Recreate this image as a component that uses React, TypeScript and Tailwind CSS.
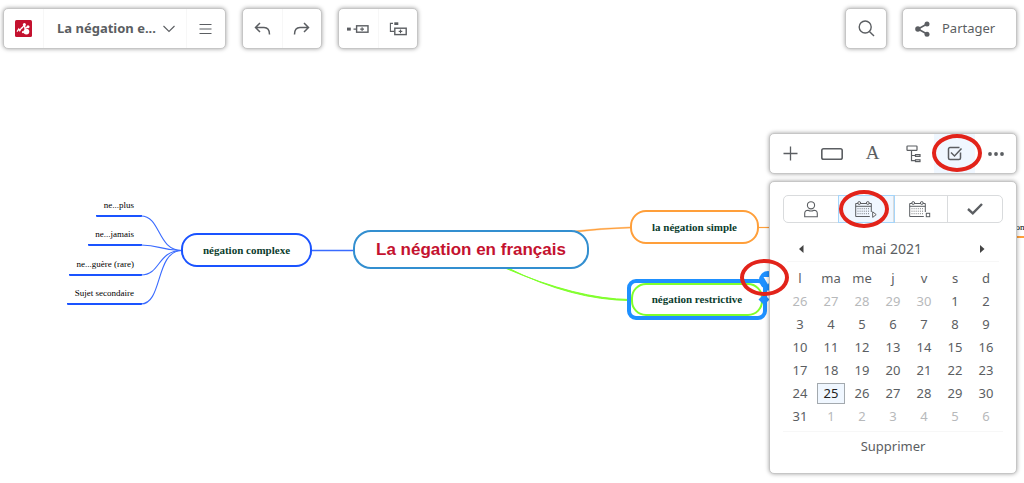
import React from 'react'

const BOX = 'rounded-[5px] border border-[#c6c6c6] bg-white shadow-[0_0_4px_rgba(0,0,0,0.36)]'
const INK = '#5b5e62'

function Logo() {
  return (
    <svg width="17" height="17" viewBox="0 0 17 17" aria-hidden="true">
      <rect width="17" height="17" rx="1.5" fill="#c4122f" />
      <g fill="#fff" stroke="#fff">
        <circle cx="9.4" cy="4.4" r="1.5" stroke="none" />
        <circle cx="13" cy="6.8" r="1.5" stroke="none" />
        <circle cx="11.4" cy="11.6" r="2.9" stroke="none" />
        <circle cx="8" cy="12.2" r="1.1" stroke="none" />
        <path d="M2 11.6 L3.8 9 L4.8 10.8 L6.6 7.6" fill="none" strokeWidth="1.2" />
        <path d="M6.4 8.6 L9.4 5 L10 8.4 L12.6 7.2" fill="none" strokeWidth="1.4" />
      </g>
    </svg>
  )
}

function TopBar() {
  return (
    <header className="relative z-10 flex items-start justify-between pt-2 pr-[7px] pl-[3px]">
      <div className="flex gap-4">
        <div className={`flex h-[41px] divide-x divide-[#f7f7f7] ${BOX}`}>
          <button aria-label="Accueil" className="flex w-10 items-center justify-center">
            <Logo />
          </button>
          <button className="flex w-[143px] items-center justify-center gap-[7px] pl-0.5 text-[13px] font-bold">
            <span>La négation e...</span>
            <svg width="12" height="8" viewBox="0 0 12 8" fill="none" stroke={INK} strokeWidth="1.1" aria-hidden="true">
              <path d="M0.5 1 L6 6.5 L11.5 1" />
            </svg>
          </button>
          <button aria-label="Menu" className="flex w-[38px] items-center justify-center pr-px">
            <svg width="13" height="12" viewBox="0 0 13 12" stroke={INK} strokeWidth="1.2" aria-hidden="true">
              <path d="M0.5 1.5H12.5M0.5 6H12.5M0.5 10.5H12.5" />
            </svg>
          </button>
        </div>
        <div className={`flex h-[41px] w-20 divide-x divide-[#f7f7f7] ${BOX}`}>
          <button aria-label="Annuler" className="flex flex-1 items-center justify-center">
            <svg width="17" height="14" viewBox="0 0 17 14" fill="none" stroke={INK} strokeWidth="1.5" aria-hidden="true">
              <path d="M6 1 L1.5 5.5 L6 10 M1.5 5.5 H10 Q15.5 5.5 15.5 12.5" />
            </svg>
          </button>
          <button aria-label="Rétablir" className="flex flex-1 items-center justify-center">
            <svg width="17" height="14" viewBox="0 0 17 14" fill="none" stroke={INK} strokeWidth="1.5" aria-hidden="true">
              <path d="M11 1 L15.5 5.5 L11 10 M15.5 5.5 H7 Q1.5 5.5 1.5 12.5" />
            </svg>
          </button>
        </div>
        <div className={`flex h-[41px] w-20 divide-x divide-[#f7f7f7] ${BOX}`}>
          <button aria-label="Ajouter un sous-thème" className="flex flex-1 items-center justify-center">
            <svg width="22" height="8" viewBox="0 0 22 8" fill="none" stroke={INK} aria-hidden="true">
              <rect x="0" y="2.6" width="3.8" height="3" fill={INK} stroke="none" />
              <path d="M6.5 4.1H10M13.2 4.1h3.8M15.1 2.3v3.6" strokeWidth="1.1" />
              <rect x="9.6" y="0.8" width="11.4" height="6.4" strokeWidth="1.4" />
            </svg>
          </button>
          <button aria-label="Ajouter un thème" className="flex flex-1 items-center justify-center">
            <svg width="18" height="14" viewBox="0 0 18 14" fill="none" stroke={INK} aria-hidden="true">
              <rect x="5.3" y="0.3" width="4" height="2.7" fill={INK} stroke="none" />
              <path d="M4 1.4H1.4V9.4H5M9.7 9.4h3.6M11.5 7.6v3.6" strokeWidth="1.1" />
              <rect x="5.8" y="6.2" width="11.4" height="6.4" strokeWidth="1.4" />
            </svg>
          </button>
        </div>
      </div>
      <div className="flex gap-[15px]">
        <button aria-label="Rechercher" className={`flex h-[41px] w-[42px] items-center justify-center ${BOX}`}>
          <svg width="17" height="17" viewBox="0 0 17 17" fill="none" stroke={INK} strokeWidth="1.4" aria-hidden="true">
            <circle cx="7.2" cy="7" r="6" />
            <path d="M11.4 11.4 L16 16" />
          </svg>
        </button>
        <button className={`flex h-[41px] w-[115px] items-center gap-3 pl-3 text-[13px] ${BOX}`}>
          <svg width="15" height="16" viewBox="0 0 15 16" stroke={INK} fill={INK} aria-hidden="true">
            <path d="M12 3 L3 8 L12 13" fill="none" strokeWidth="1.6" />
            <circle cx="12" cy="3" r="2.5" stroke="none" />
            <circle cx="2.9" cy="8" r="2.7" stroke="none" />
            <circle cx="12" cy="13.2" r="2.5" stroke="none" />
          </svg>
          <span>Partager</span>
        </button>
      </div>
    </header>
  )
}

function Leaf({ className, children }: { className: string; children: React.ReactNode }) {
  return (
    <div className={`absolute h-[18px] rounded-b-[1px] border-b-2 border-[#1a53ff] pr-2 text-right text-[9px] leading-[13px] whitespace-nowrap ${className}`}>
      {children}
    </div>
  )
}

function MindMap() {
  return (
    <main className="absolute inset-0 overflow-hidden font-['Liberation_Serif',serif] text-black">
      <svg className="absolute top-0 left-0" width="1024" height="483" viewBox="0 0 1024 483" fill="none" aria-hidden="true">
        <g stroke="#3a6bff" strokeWidth="1.1">
          <path d="M141 216C161 216 157 250.5 182 250.5" />
          <path d="M141 245C161 245 160 250.5 182 250.5" />
          <path d="M141 275C161 275 157 250.5 182 250.5" />
          <path d="M141 304C163 304 155 250.5 182 250.5" />
          <path d="M311 250.5H354" strokeWidth="1.4" />
        </g>
        <path d="M574 231 Q600 228 631 227 V228 Q600 229 577 232Z" fill="#ff9f3a" stroke="#ff9f3a" strokeWidth=".5" />
        <path d="M758 227.5H770" stroke="#ff9f3a" strokeWidth="1.2" />
        <path d="M1012 237H1024" stroke="#ff9f3a" strokeWidth="2" />
        <path d="M505 268 Q577 299 630 299.5 V300.5 Q572 300 508 268Z" fill="#80ff2b" stroke="#80ff2b" strokeWidth="1" />
      </svg>

      <Leaf className="top-[199px] left-[96px] w-[46px]">ne...plus</Leaf>
      <Leaf className="top-[228px] left-[88px] w-[54px]">ne...jamais</Leaf>
      <Leaf className="top-[258px] left-[69px] w-[73px]">ne...guère (rare)</Leaf>
      <Leaf className="top-[287px] left-[67px] w-[75px]">Sujet secondaire</Leaf>

      <div className="absolute top-[233px] left-[181px] flex h-[34px] w-[131px] items-center justify-center rounded-[16px] border-2 border-[#1a53ff] bg-white text-[11px] font-bold text-[#0b3d2e]">
        négation complexe
      </div>
      <h1 className="absolute top-[230px] left-[353px] flex h-[39px] w-[236px] items-center justify-center rounded-[18px] border-2 border-[#338fd0] bg-white font-['Liberation_Sans',sans-serif] text-[17px] font-bold text-[#c4122f]">
        La négation en français
      </h1>
      <div className="absolute top-[210px] left-[630px] flex h-[34px] w-[129px] items-center justify-center rounded-[16px] border-2 border-[#ff9f3a] bg-white text-[11px] font-bold text-[#0b3d2e]">
        la négation simple
      </div>
      <div className="absolute top-[279px] left-[627px] h-[41px] w-[140px] rounded-[9px] border-4 border-[#1e90ff] bg-white">
        <div className="flex h-full items-center justify-center rounded-[15px] border-2 border-[#80ff2b] text-[11px] font-bold text-[#0b3d2e]">
          négation restrictive
        </div>
      </div>
      <svg className="absolute top-[270px] left-[755px]" width="20" height="40" viewBox="0 0 20 40" aria-hidden="true">
        <circle cx="13" cy="10" r="9" fill="#1e90ff" />
        <path d="M6 15 L13 21 L20 15Z" fill="#1e90ff" />
        <path d="M8.5 7 H17.5 L13 14.5Z" fill="#fff" />
        <path d="M3.5 29.5 L9 24 L14.5 29.5 L9 35Z" fill="#1e90ff" />
      </svg>
      <span className="absolute top-[221px] left-[1013px] text-[9px] leading-3">ion</span>
    </main>
  )
}

function Ring({ className }: { className: string }) {
  return <span className={`pointer-events-none absolute z-20 rounded-[50%] border-4 border-[#e2231a] ${className}`} />
}

function NodeToolbar() {
  return (
    <div role="toolbar" className={`flex h-[41px] ${BOX}`}>
      <button aria-label="Ajouter" className="flex flex-1 items-center justify-center">
        <svg width="15" height="15" viewBox="0 0 15 15" stroke={INK} strokeWidth="1.3" aria-hidden="true">
          <path d="M7.5 0.5V14.5M0.5 7.5H14.5" />
        </svg>
      </button>
      <button aria-label="Forme" className="flex flex-1 items-center justify-center">
        <svg width="22" height="12" viewBox="0 0 22 12" fill="none" stroke={INK} strokeWidth="1.6" aria-hidden="true">
          <rect x="0.8" y="0.8" width="20.4" height="10.4" rx="1.8" />
        </svg>
      </button>
      <button aria-label="Police" className="flex-1 font-['Liberation_Serif',serif] text-[19px]">
        A
      </button>
      <button aria-label="Disposition" className="flex flex-1 items-center justify-center">
        <svg width="15" height="18" viewBox="0 0 15 18" fill="none" stroke={INK} strokeWidth="1.2" aria-hidden="true">
          <rect x="1" y="1" width="10" height="4.4" rx="0.6" />
          <path d="M5.5 5.4V15.7H9.5M5.5 10.5H9.5" />
          <rect x="9.5" y="9.6" width="4.5" height="1.8" />
          <rect x="9.5" y="14.8" width="4.5" height="1.8" />
        </svg>
      </button>
      <button aria-label="Tâche" aria-pressed="true" className="relative flex flex-1 items-center justify-center bg-[#f0f7ff]">
        <svg width="16" height="15" viewBox="0 0 16 15" fill="none" stroke={INK} aria-hidden="true">
          <path d="M12.5 1.5H3A1.5 1.5 0 0 0 1.5 3V12A1.5 1.5 0 0 0 3 13.5H12A1.5 1.5 0 0 0 13.5 12V6.5" strokeWidth="1.5" />
          <path d="M4 6.5 L7.5 10 L14.5 2.5" strokeWidth="1.5" />
        </svg>
        <Ring className="top-0 -left-0.5 h-[38px] w-[50px]" />
      </button>
      <button aria-label="Plus" className="flex flex-1 items-center justify-center">
        <svg width="16" height="4" viewBox="0 0 16 4" fill={INK} aria-hidden="true">
          <circle cx="2" cy="2" r="1.9" />
          <circle cx="8" cy="2" r="1.9" />
          <circle cx="14" cy="2" r="1.9" />
        </svg>
      </button>
    </div>
  )
}

function CalendarIcon({ end }: { end?: boolean }) {
  return (
    <svg width="22" height="17" viewBox="0 0 22 17" fill="none" stroke={INK} aria-hidden="true">
      <path d="M14.8 15.5H0.7V2.5H16.3V11M0.7 5.3H16.3" />
      <circle cx="4.2" cy="2" r="1.4" fill="#fff" />
      <circle cx="12.8" cy="2" r="1.4" fill="#fff" />
      <path d="M2.5 7.7H15M2.5 10.2H15M2.5 12.7H15" strokeDasharray="1 1.1" strokeWidth=".8" />
      {end ? (
        <rect x="17.3" y="12.3" width="3.4" height="3.4" fill="#fff" />
      ) : (
        <path d="M17.7 10.8 L21.2 13.6 L17.7 16.4Z" fill="#fff" />
      )}
    </svg>
  )
}

const WEEKDAYS = ['l', 'ma', 'me', 'j', 'v', 's', 'd']
const WEEKS = [
  [26, 27, 28, 29, 30, 1, 2],
  [3, 4, 5, 6, 7, 8, 9],
  [10, 11, 12, 13, 14, 15, 16],
  [17, 18, 19, 20, 21, 22, 23],
  [24, 25, 26, 27, 28, 29, 30],
  [31, 1, 2, 3, 4, 5, 6],
]

function dayStyle(week: number, day: number) {
  if ((week === 0 && day > 20) || (week === 5 && day < 20)) return 'text-[#b7b9bb]'
  if (week === 4 && day === 25) return 'border border-[#a3a9ae] bg-[#f0f7ff] text-[#222]'
  return ''
}

function TaskPanel() {
  return (
    <section className={`px-[13px] pt-[13px] pb-[11px] text-[13px] ${BOX}`}>
      <div className="flex h-7 divide-x divide-[#d9dbdd] rounded-[5px] border border-[#d9dbdd]">
        <button aria-label="Ressource" className="flex flex-1 items-center justify-center">
          <svg width="14" height="17" viewBox="0 0 14 17" fill="none" stroke={INK} strokeWidth="1.1" aria-hidden="true">
            <circle cx="7" cy="4.3" r="3.6" />
            <path d="M0.7 15.8V12.5Q0.7 9.2 4 9.2Q7 10.8 10 9.2Q13.3 9.2 13.3 12.5V15.8Z" />
          </svg>
        </button>
        <button
          aria-label="Date de début"
          aria-pressed="true"
          className="relative flex flex-1 items-center justify-center bg-[#f0f7ff] outline outline-[#a5d5fa]"
        >
          <CalendarIcon />
          <Ring className="-top-1.5 left-0 h-[38px] w-[50px]" />
        </button>
        <button aria-label="Date de fin" className="flex flex-1 items-center justify-center">
          <CalendarIcon end />
        </button>
        <button aria-label="Avancement" className="flex flex-1 items-center justify-center">
          <svg width="16" height="12" viewBox="0 0 16 12" fill="none" stroke={INK} strokeWidth="2.4" aria-hidden="true">
            <path d="M1 6 L5.8 10.3 L15 1" />
          </svg>
        </button>
      </div>
      <div className="mx-1 mt-3 flex h-[27px] items-center justify-between border-b border-[#f7f7f7] px-3 pt-0.5">
        <button aria-label="Mois précédent">
          <svg width="5" height="8" viewBox="0 0 5 8" fill="#444" aria-hidden="true">
            <path d="M4.5 0V8L0 4Z" />
          </svg>
        </button>
        <span className="text-sm">mai 2021</span>
        <button aria-label="Mois suivant" className="pr-0.5">
          <svg width="5" height="8" viewBox="0 0 5 8" fill="#444" aria-hidden="true">
            <path d="M0 0V8L4.5 4Z" />
          </svg>
        </button>
      </div>
      <table className="mx-auto mt-[5px] w-[217px] table-fixed border-collapse text-center">
        <thead>
          <tr className="h-[23px]">
            {WEEKDAYS.map((d) => (
              <th key={d} scope="col" className="p-0 font-normal">
                {d}
              </th>
            ))}
          </tr>
        </thead>
        <tbody>
          {WEEKS.map((days, w) => (
            <tr key={w} className="h-[23px]">
              {days.map((d) => (
                <td key={d} className="p-0">
                  <button className={`mx-auto flex h-[21px] w-7 items-center justify-center ${dayStyle(w, d)}`}>{d}</button>
                </td>
              ))}
            </tr>
          ))}
        </tbody>
      </table>
      <div className="mt-[3px] border-t border-[#f7f7f7]">
        <button className="block h-[30px] w-full">Supprimer</button>
      </div>
    </section>
  )
}

export default function App() {
  return (
    <div className="relative min-h-screen overflow-hidden bg-white font-['Noto_Sans',sans-serif] text-[#5b5e62]">
      <MindMap />
      <TopBar />
      <aside className="relative mt-[84px] mr-[7px] ml-auto flex w-[248px] flex-col gap-[7px]">
        <NodeToolbar />
        <TaskPanel />
        <Ring className="top-[126px] -left-[29px] h-[37px] w-[49px]" />
      </aside>
    </div>
  )
}
